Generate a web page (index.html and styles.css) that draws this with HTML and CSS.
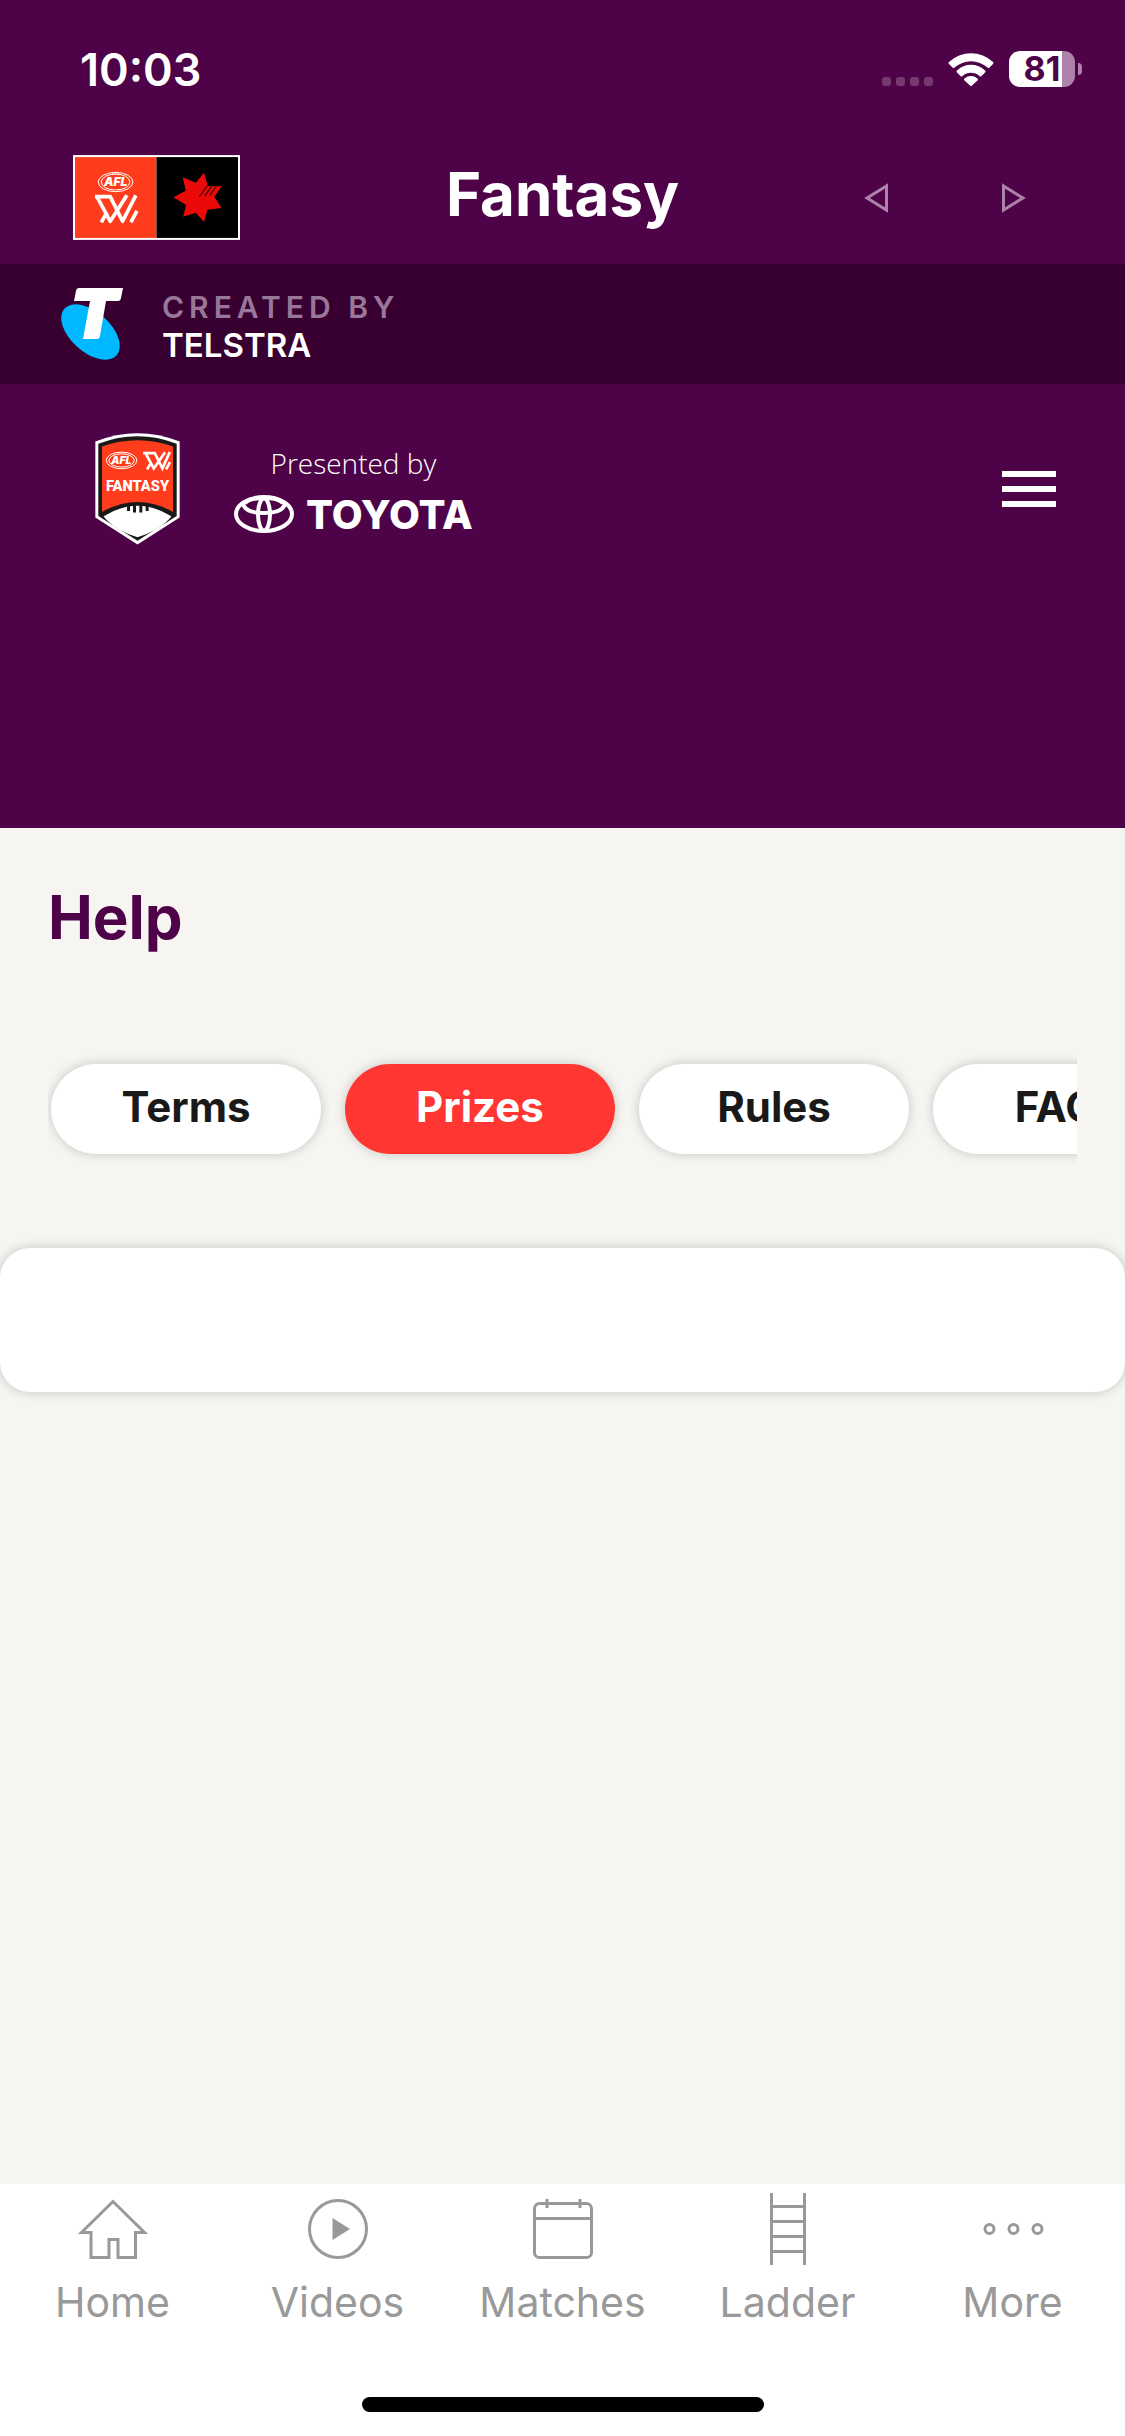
FILE: index.html
```html
<!DOCTYPE html>
<html lang="en">
<head>
<meta charset="utf-8">
<meta name="viewport" content="width=device-width, initial-scale=1">
<title>Fantasy</title>
<link rel="stylesheet" href="styles.css">
</head>
<body>
<div class="app">
  <div class="status">
    <span class="status-time">10:03</span>
    <div class="status-icons">
      <svg class="signal" viewBox="0 0 51 33" aria-hidden="true"><rect x="0" y="24" width="9" height="9" rx="3"/><rect x="14" y="24" width="9" height="9" rx="3"/><rect x="28" y="24" width="9" height="9" rx="3"/><rect x="42" y="24" width="9" height="9" rx="3"/></svg>
      <svg class="wifi" viewBox="0 0 46 33" aria-hidden="true"><path d="M1 9a32 32 0 0 1 44 0q1 1 0 2l-3.500 3.500q-1 1-2 0a25 25 0 0 0-33 0q-1 1-2 0L1 11q-1-1 0-2zM9 17.500a20 20 0 0 1 28 0q1 1 0 2l-3.500 3.500q-1 1-2 0a13 13 0 0 0-17 0q-1 1-2 0L9 19.500q-1-1 0-2zM16.500 25.500a10 10 0 0 1 13 0q1 1 0 2l-5.500 5q-1 1-2 0l-5.500-5q-1-1 0-2z"/></svg>
      <span class="battery"><span class="battery-level">81</span></span>
    </div>
  </div>

  <header class="navbar">
    <a class="brand" href="#" aria-label="AFLW home">
      <svg viewBox="38 30 502 255" aria-hidden="true">
        <rect x="38" y="30" width="502" height="255" fill="#fff"/>
        <rect x="44" y="36" width="245" height="243" fill="#ff3c1c"/>
        <rect x="289" y="36" width="245" height="243" fill="#000"/>
        <g fill="none" stroke="#fff" stroke-width="3"><ellipse cx="166" cy="111" rx="52" ry="29"/><ellipse cx="166" cy="111" rx="43" ry="24"/><path d="M158 83v7M166 82v7M174 83v7"/></g>
        <text class="afl-mark" x="166" y="123" font-size="36" text-anchor="middle">AFL</text>
        <path d="M104 155h46l37 74 40-78M110 155l40 74 50-78M123 232l17-30M212 232l18-34" fill="none" stroke="#fff" stroke-width="11" stroke-linejoin="round"/>
        <path fill="#ec0a08" d="M432 83l11 40 42 1-22 31 21 34-42 5-10 37-25-28-38 12 9-35-38-23 37-20-9-40 39 16z"/>
        <path d="M418 155l24-33M434 153l22-31M449 152l21-30" stroke="#500" stroke-width="4"/>
      </svg>
    </a>
    <h1 class="navbar-title">Fantasy</h1>
    <div class="navbar-actions">
      <button class="arrow" type="button" aria-label="Back"><svg viewBox="0 0 24 30"><path d="M22.500 3v24L3 15z"/></svg></button>
      <button class="arrow" type="button" aria-label="Forward"><svg viewBox="0 0 24 30"><path d="M1.500 3v24L21 15z"/></svg></button>
    </div>
  </header>

  <div class="credit">
    <svg class="telstra" viewBox="60 288 64 72" aria-hidden="true"><ellipse cx="90.500" cy="332" rx="35" ry="20" transform="rotate(42 90.500 332)" fill="#00b8ff"/><path fill="#fff" d="M79 288h44l-2 10q-.500 3-3 3h-12l-6 35q-.500 3-3 3H83l7-38H74l2-10q.500-3 3-3z"/></svg>
    <p class="credit-text"><span class="credit-label">CREATED BY</span><span class="credit-name">TELSTRA</span></p>
  </div>

  <section class="hero">
    <a class="shield" href="#" aria-label="AFLW Fantasy">
      <svg viewBox="30 24 256 336" aria-hidden="true">
        <path fill="#fff" d="M31 49Q158-1 285 49v229l-127 81L31 278z"/>
        <path fill="#191a18" d="M40 56q118-45 236 0v217l-118 75-118-75z"/>
        <path fill="#ff3c1c" d="M51 64q107-38 214 0v197q-107-60-214 0z"/>
        <path fill="#fff" d="M56 274q102-63 204 0l-6 8q-34 36-96 55-62-19-96-55z"/>
        <path d="M131 236v22M149 236v27M168 236v27M187 236v22" stroke="#191a18" stroke-width="9"/>
        <g fill="none" stroke="#fff" stroke-width="3"><ellipse cx="110" cy="106" rx="46" ry="25"/><ellipse cx="110" cy="106" rx="38" ry="20"/></g>
        <text class="afl-mark" x="109" y="117" font-size="31" text-anchor="middle">AFL</text>
        <g fill="none" stroke="#fff" stroke-width="8"><path d="M175 84h35l23 46 22-49M182 84l25 46 34-49M187 133l11-19M244 133l12-22"/></g>
        <text class="fantasy-mark" x="158" y="198" font-size="44" text-anchor="middle">FANTASY</text>
      </svg>
    </a>
    <div class="partner">
      <span class="partner-label">Presented by</span>
      <span class="partner-brand">
        <svg viewBox="0 0 60 38" aria-hidden="true"><ellipse cx="30" cy="19" rx="28" ry="17"/><ellipse cx="30" cy="19.500" rx="6" ry="16"/><path d="M9 8q1 10 21 10t21-10M11 8q5-5 19-5t19 5"/></svg>
        <span class="partner-name">TOYOTA</span>
      </span>
    </div>
    <button class="menu" type="button" aria-label="Menu"><span></span><span></span><span></span></button>
  </section>

  <main class="content">
    <h2 class="page-title">Help</h2>
    <div class="pills">
      <button class="pill" type="button">Terms</button>
      <button class="pill pill-active" type="button">Prizes</button>
      <button class="pill" type="button">Rules</button>
      <button class="pill" type="button">FAQs</button>
    </div>
    <div class="panel"></div>
  </main>

  <nav class="tabbar">
    <div class="tabs">
      <a class="tab" href="#"><svg viewBox="0 0 72 72" aria-hidden="true"><path d="M36 8.500 4.500 39.500h9.500v25h18v-18h9v18h17.500v-25h9z"/></svg>Home</a>
      <a class="tab" href="#"><svg viewBox="0 0 72 72" aria-hidden="true"><circle cx="36" cy="36" r="28.500"/><path class="solid" d="M30.500 25v22L48 36z"/></svg>Videos</a>
      <a class="tab" href="#"><svg viewBox="0 0 72 72" aria-hidden="true"><rect x="7.500" y="10.500" width="57" height="54" rx="5"/><path d="M7.500 25.500h57M20 6v9M53 6v9"/></svg>Matches</a>
      <a class="tab" href="#"><svg viewBox="0 0 72 72" aria-hidden="true"><path d="M19.500 0v72M52.500 0v72M19.500 13.500h33M19.500 28.500h33M19.500 43.500h33M19.500 58.500h33"/></svg>Ladder</a>
      <a class="tab" href="#"><svg viewBox="0 0 72 72" aria-hidden="true"><circle cx="12.500" cy="36" r="4.500"/><circle cx="36.500" cy="36" r="4.500"/><circle cx="60.500" cy="36" r="4.500"/></svg>More</a>
    </div>
    <div class="home-indicator"></div>
  </nav>
</div>
</body>
</html>
```
FILE: styles.css
```css
:root {
  --purple: #4e0348;
  --purple-dark: #380030;
  --red: #ff3632;
  --paper: #f7f5f1;
  --grey: #999;
}

* {
  box-sizing: border-box;
}

body {
  margin: 0;
  font-family: Inter, "Liberation Sans", sans-serif;
  background: var(--paper);
}

h1,
h2,
p {
  margin: 0;
}

button {
  padding: 0;
  border: 0;
  background: none;
  font: inherit;
  cursor: pointer;
}

a {
  color: inherit;
  text-decoration: none;
}

svg {
  display: block;
}

.app {
  display: flex;
  flex-direction: column;
  min-height: 100vh;
}

/* Status bar */
.status {
  display: flex;
  align-items: center;
  justify-content: space-between;
  height: 138px;
  padding: 0 43px 0 80px;
  background: var(--purple);
  color: #fff;
}

.status-time {
  font-size: 45px;
  font-weight: 600;
}

.status-icons {
  display: flex;
  align-items: center;
  gap: 15px;
}

.signal {
  width: 51px;
  height: 33px;
  fill: #76396f;
}

.wifi {
  width: 46px;
  height: 33px;
  fill: #fff;
}

.battery {
  display: flex;
  position: relative;
  width: 66px;
  height: 36px;
  margin-right: 7px;
  border-radius: 11px;
  background: linear-gradient(to right, #fff 53px, #ad82aa 53px);
}

.battery::after {
  content: "";
  position: absolute;
  left: 69px;
  top: 12px;
  width: 4px;
  height: 12px;
  border-radius: 0 4px 4px 0;
  background: #ad82aa;
}

.battery-level {
  width: 100%;
  color: var(--purple);
  font-size: 34px;
  font-weight: 700;
  line-height: 36px;
  text-align: center;
}

/* Title bar */
.navbar {
  display: grid;
  grid-template-columns: 1fr auto 1fr;
  align-items: center;
  height: 126px;
  padding: 0 73px 8px;
  background: var(--purple);
  color: #fff;
}

.brand svg {
  width: 167px;
  height: 85px;
}

.afl-mark {
  fill: #fff;
  font-weight: 900;
  font-style: italic;
}

.fantasy-mark {
  fill: #fff;
  font-family: Roboto, sans-serif;
  font-weight: 900;
}

.navbar-title {
  padding-bottom: 6px;
  font-size: 60px;
  font-weight: 700;
  line-height: 72px;
}

.navbar-actions {
  display: flex;
  justify-content: flex-end;
  gap: 62px;
}

.arrow {
  padding: 2px 26px 0;
}

.arrow svg {
  width: 24px;
  height: 30px;
  fill: none;
  stroke: #ad82aa;
  stroke-width: 3;
}

/* Credit strip */
.credit {
  display: flex;
  gap: 38px;
  height: 120px;
  padding: 24px 60px;
  background: var(--purple-dark);
}

.telstra {
  width: 64px;
  height: 72px;
}

.credit-text {
  display: flex;
  flex-direction: column;
  font-weight: 600;
  line-height: 38px;
}

.credit-label {
  color: #99779a;
  font-size: 30px;
  letter-spacing: 5px;
}

.credit-name {
  color: #fff;
  font-size: 33px;
}

/* Fantasy header */
.hero {
  display: flex;
  align-items: center;
  padding: 49px 69px 283px 95px;
  background: var(--purple);
  color: #fff;
}

.shield svg {
  width: 85px;
  height: 112px;
}

.partner {
  display: flex;
  flex-direction: column;
  align-items: center;
  gap: 14px;
  margin-left: 54px;
}

.partner-label {
  font-family: "Open Sans", "Noto Sans", sans-serif;
  font-size: 28px;
  font-weight: 300;
  line-height: 36px;
}

.partner-brand {
  display: flex;
  align-items: center;
  gap: 12px;
  height: 38px;
}

.partner-brand svg {
  width: 60px;
  height: 38px;
  fill: none;
  stroke: #fff;
  stroke-width: 4;
}

.partner-name {
  font-size: 40px;
  font-weight: 800;
}

.menu {
  display: flex;
  flex-direction: column;
  gap: 9px;
  margin-left: auto;
}

.menu span {
  width: 54px;
  height: 6px;
  background: #fff;
}

/* Content */
.content {
  flex: 1;
  padding-top: 53px;
}

.page-title {
  padding: 0 48px;
  color: var(--purple);
  font-size: 60px;
  font-weight: 700;
  line-height: 72px;
}

.pills {
  display: flex;
  gap: 24px;
  margin: 81px 48px 64px;
  padding: 30px 3px;
  overflow: hidden;
}

.pill {
  flex: none;
  width: 270px;
  height: 90px;
  padding-bottom: 6px;
  border-radius: 45px;
  background: #fff;
  box-shadow: 0 0 12px rgba(0, 0, 0, 0.2);
  color: #191919;
  font-size: 42px;
  font-weight: 700;
}

.pill-active {
  background: var(--red);
  color: #fff;
}

.panel {
  height: 144px;
  border-radius: 30px;
  background: #fff;
  box-shadow: 0 0 12px rgba(0, 0, 0, 0.2);
}

/* Tab bar */
.tabbar {
  padding: 9px 0 24px;
  background: #fff;
}

.tabs {
  display: grid;
  grid-template-columns: repeat(5, 1fr);
}

.tab {
  display: flex;
  flex-direction: column;
  align-items: center;
  gap: 13px;
  color: var(--grey);
  font-size: 41px;
  line-height: 48px;
}

.tab svg {
  width: 72px;
  height: 72px;
  fill: none;
  stroke: currentColor;
  stroke-width: 3;
}

.tab .solid {
  fill: currentColor;
  stroke: none;
}

.home-indicator {
  width: 402px;
  height: 15px;
  margin: 71px auto 0;
  border-radius: 8px;
  background: #000;
}
```
